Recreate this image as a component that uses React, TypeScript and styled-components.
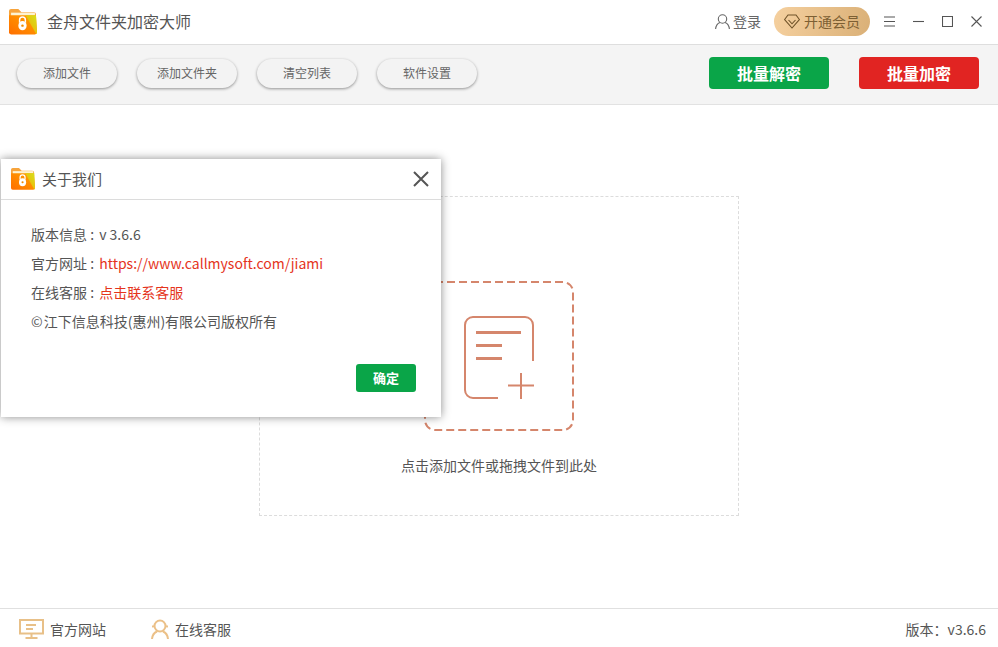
import React from 'react'
import styled, { createGlobalStyle } from 'styled-components'

const GlobalStyle = createGlobalStyle`
  html, body {
    margin: 0;
    padding: 0;
    background: #fff;
  }
  * {
    box-sizing: border-box;
  }
  body {
    font-family: 'Noto Sans CJK SC', 'Liberation Sans', sans-serif;
    color: #555;
  }
`

const Page = styled.div`
  position: relative;
  width: 998px;
  height: 647px;
  display: flex;
  flex-direction: column;
  overflow: hidden;
  background: #fff;
`

const TitleBar = styled.header`
  height: 45px;
  flex: none;
  display: flex;
  align-items: center;
  padding: 0 16px 1px 9px;
  border-bottom: 1px solid #dedede;
`

const AppName = styled.h1`
  margin: 0 0 2px 10px;
  font-size: 16px;
  font-weight: 400;
  color: #555;
`

const TitleActions = styled.div`
  margin-left: auto;
  display: flex;
  align-items: center;
`

const Login = styled.div`
  display: flex;
  align-items: center;
  gap: 3px;
  font-size: 14px;
  color: #666;
  margin-right: 13px;
`

const LoginText = styled.span`
  margin-bottom: 2px;
`

const VipPill = styled.div`
  width: 96px;
  height: 29px;
  border-radius: 15px;
  display: flex;
  align-items: center;
  justify-content: center;
  gap: 4px;
  font-size: 14px;
  color: #7d5f33;
  background: linear-gradient(100deg, #f5d09f, #dab077);
  margin-right: 14px;
`

const VipText = styled.span`
  margin-bottom: 2px;
`

const WindowButtons = styled.div`
  display: flex;
  gap: 18px;
`

const Toolbar = styled.div`
  height: 60px;
  flex: none;
  display: flex;
  align-items: center;
  padding: 0 19px 3px 17px;
  background: #f4f4f4;
  border-bottom: 1px solid #e2e2e2;
`

const ToolButton = styled.button`
  width: 100px;
  height: 29px;
  margin: 1px 20px 0 0;
  padding: 0 0 2px;
  border: 0;
  border-radius: 15px;
  background: #f3f3f3;
  box-shadow: 0 1px 3px rgba(0, 0, 0, 0.4);
  font: inherit;
  font-size: 12px;
  color: #666;
`

const BatchButton = styled.button<{ $tone: string; $first?: boolean }>`
  width: 120px;
  height: 32px;
  margin-left: ${(props) => (props.$first ? 'auto' : '30px')};
  padding: 0 0 1px;
  border: 0;
  border-radius: 4px;
  background: ${(props) => props.$tone};
  font: inherit;
  font-size: 16px;
  font-weight: 700;
  color: #fff;
`

const Main = styled.main`
  flex: 1;
  display: flex;
  align-items: center;
  justify-content: center;
  padding-bottom: 1px;
`

const DropZone = styled.div`
  width: 480px;
  height: 320px;
  border: 1px dashed #dcdcdc;
  display: flex;
  flex-direction: column;
  align-items: center;
  padding-top: 84px;
`

const DropHint = styled.p`
  margin: 24px 0 0;
  font-size: 14px;
  line-height: 20px;
  color: #555;
`

const Footer = styled.footer`
  height: 39px;
  flex: none;
  display: flex;
  align-items: center;
  padding: 2px 12px 0 19px;
  border-top: 1px solid #e0e0e0;
  font-size: 14px;
  color: #555;
`

const FooterLink = styled.div<{ $width: number }>`
  width: ${(props) => props.$width}px;
  display: flex;
  align-items: center;
  gap: 6px;
`

const Version = styled.div`
  margin-left: auto;
`

const Dialog = styled.section`
  position: absolute;
  left: 1px;
  top: 159px;
  width: 440px;
  height: 258px;
  background: #fff;
  box-shadow: 0 0 9px rgba(0, 0, 0, 0.45);
`

const DialogHead = styled.div`
  height: 41px;
  display: flex;
  align-items: center;
  padding: 0 12px 0 10px;
  border-bottom: 1px solid #dcdcdc;
`

const DialogTitle = styled.h2`
  margin: 0 0 1px 7px;
  font-size: 15px;
  font-weight: 400;
  color: #555;
`

const CloseButton = styled.div`
  margin-left: auto;
  display: flex;
`

const DialogBody = styled.div`
  padding: 20px 30px 0;
`

const InfoRow = styled.div`
  font-size: 14px;
  line-height: 29px;
  color: #555;
`

const CopyMark = styled.span`
  margin-right: 1px;
`

const InfoLabel = styled.span`
  margin-right: 2px;
`

const RedText = styled.span`
  color: #e5341c;
`

const DialogFoot = styled.div`
  display: flex;
  justify-content: flex-end;
  padding: 28px 25px 0 0;
`

const ConfirmButton = styled.button`
  width: 60px;
  height: 28px;
  padding: 0 0 1px;
  border: 0;
  border-radius: 3px;
  background: #0aa548;
  font: inherit;
  font-size: 13px;
  font-weight: 700;
  color: #fff;
`

const FolderLogo: React.FC<{ size: number; id: string }> = ({ size, id }) => (
  <svg width={size} height={(size * 26) / 28} viewBox="1 1 27 25">
    <defs>
      <linearGradient id={id} x1="0" y1="1" x2="1" y2="0">
        <stop offset="0" stopColor="#ff6e00" />
        <stop offset="1" stopColor="#ffa400" />
      </linearGradient>
      <linearGradient id={`${id}-tip`} x1="0" y1="1" x2="1" y2="0">
        <stop offset="0" stopColor="#f6a800" />
        <stop offset="1" stopColor="#d4e21c" />
      </linearGradient>
    </defs>
    <path d="M1 3a2 2 0 0 1 2-2h7l3 3h12a2 2 0 0 1 2 2v4H1z" fill="#f7a43c" />
    <rect x="3" y="4.500" width="23" height="4" fill="#fdf3d2" />
    <path d="M1 7h26l1 16.500a2 2 0 0 1-2 2H3A2 2 0 0 1 1 23.500z" fill={`url(#${id})`} />
    <path d="M17 7h10l1 16.500a2 2 0 0 1-.8 1.600z" fill={`url(#${id}-tip)`} />
    <path d="M11.200 14v-2.500a2.800 2.800 0 0 1 5.600 0V14" fill="none" stroke="#fff" strokeWidth="1.400" />
    <ellipse cx="14" cy="17" rx="4" ry="4.500" fill="#fff" />
    <circle cx="14" cy="17" r="1.200" fill="#f08a00" />
  </svg>
)

const UserIcon = () => (
  <svg width="15" height="15" viewBox="0 0 15 15" fill="none" stroke="#666" strokeWidth="1.100">
    <circle cx="7.500" cy="5" r="4.200" />
    <path d="M.6 15c.3-3.500 2.700-6 4.400-6.600M14.400 15c-.3-3.500-2.700-6-4.400-6.600" />
  </svg>
)

const DiamondIcon = () => (
  <svg width="16" height="15" viewBox="0 0 16 15" fill="none" stroke="#6f5228" strokeWidth="1.100">
    <path d="M4 1h8l3.400 4.500L8 14 .6 5.500z" />
    <path d="M4.500 6 8 9.800 11.500 6" />
  </svg>
)

const WindowIcon: React.FC<{ d: string }> = ({ d }) => (
  <svg width="11" height="11" viewBox="0 0 11 11" fill="none" stroke="#555" strokeWidth="1.100">
    <path d={d} />
  </svg>
)

const DropIcon = () => (
  <svg width="150" height="150" viewBox="0 0 150 150" fill="none" stroke="#d5866c">
    <rect x="1" y="1" width="148" height="148" rx="10" strokeWidth="2" strokeDasharray="8 4" />
    <path d="M109 80V44a8 8 0 0 0-8-8H49a8 8 0 0 0-8 8v65a8 8 0 0 0 8 8h25" strokeWidth="2" />
    <path d="M52 51.500h45M52 64.500h26M52 77.500h26" strokeWidth="3" />
    <path d="M84 104.500h26M97 92v26" strokeWidth="2" />
  </svg>
)

const MonitorIcon = () => (
  <svg width="25" height="20" viewBox="0 0 25 20" fill="none" stroke="#e8c088" strokeWidth="2">
    <rect x="1" y="1" width="23" height="13.500" />
    <path d="M7 6h10M7 10h7" />
    <path d="M12.500 14.500V19M6.500 19h12" />
  </svg>
)

const AgentIcon = () => (
  <svg width="18" height="20" viewBox="0 0 18 20" fill="none" stroke="#ebc088" strokeWidth="2">
    <circle cx="9" cy="7" r="5.500" />
    <path d="M1 20c.4-4 2.500-6.500 5-7.500M17 20c-.4-4-2.500-6.500-5-7.500" />
    <path d="M1 7.500c1 0 2 0 2.500-.5M17 7.500c-1 0-2 0-2.500-.5" />
  </svg>
)

const App: React.FC = () => {
  return (
    <Page>
      <GlobalStyle />
      <TitleBar>
        <FolderLogo size={28} id="app-logo" />
        <AppName>金舟文件夹加密大师</AppName>
        <TitleActions>
          <Login>
            <UserIcon />
            <LoginText>登录</LoginText>
          </Login>
          <VipPill>
            <DiamondIcon />
            <VipText>开通会员</VipText>
          </VipPill>
          <WindowButtons>
            <WindowIcon d="M0 1h11M0 5.500h11M0 10h11" />
            <WindowIcon d="M0 5.500h11" />
            <WindowIcon d="M.5.500h10v10H.5z" />
            <WindowIcon d="M.5.500l10 10M10.500.500l-10 10" />
          </WindowButtons>
        </TitleActions>
      </TitleBar>

      <Toolbar>
        <ToolButton>添加文件</ToolButton>
        <ToolButton>添加文件夹</ToolButton>
        <ToolButton>清空列表</ToolButton>
        <ToolButton>软件设置</ToolButton>
        <BatchButton $first $tone="#0aa548">批量解密</BatchButton>
        <BatchButton $tone="#e12422">批量加密</BatchButton>
      </Toolbar>

      <Main>
        <DropZone>
          <DropIcon />
          <DropHint>点击添加文件或拖拽文件到此处</DropHint>
        </DropZone>
      </Main>

      <Footer>
        <FooterLink $width={132}>
          <MonitorIcon />
          官方网站
        </FooterLink>
        <FooterLink $width={120}>
          <AgentIcon />
          在线客服
        </FooterLink>
        <Version>版本：v3.6.6</Version>
      </Footer>

      <Dialog>
        <DialogHead>
          <FolderLogo size={24} id="dialog-logo" />
          <DialogTitle>关于我们</DialogTitle>
          <CloseButton>
            <svg width="16" height="16" viewBox="0 0 16 16" fill="none" stroke="#555" strokeWidth="2">
              <path d="M1 1l14 14M15 1L1 15" />
            </svg>
          </CloseButton>
        </DialogHead>
        <DialogBody>
          <InfoRow>
            <InfoLabel>版本信息 :</InfoLabel> v 3.6.6
          </InfoRow>
          <InfoRow>
            <InfoLabel>官方网址 :</InfoLabel> <RedText>https://www.callmysoft.com/jiami</RedText>
          </InfoRow>
          <InfoRow>
            <InfoLabel>在线客服 :</InfoLabel> <RedText>点击联系客服</RedText>
          </InfoRow>
          <InfoRow>
            <CopyMark>©</CopyMark>江下信息科技(惠州)有限公司版权所有
          </InfoRow>
        </DialogBody>
        <DialogFoot>
          <ConfirmButton>确定</ConfirmButton>
        </DialogFoot>
      </Dialog>
    </Page>
  )
}

export default App
